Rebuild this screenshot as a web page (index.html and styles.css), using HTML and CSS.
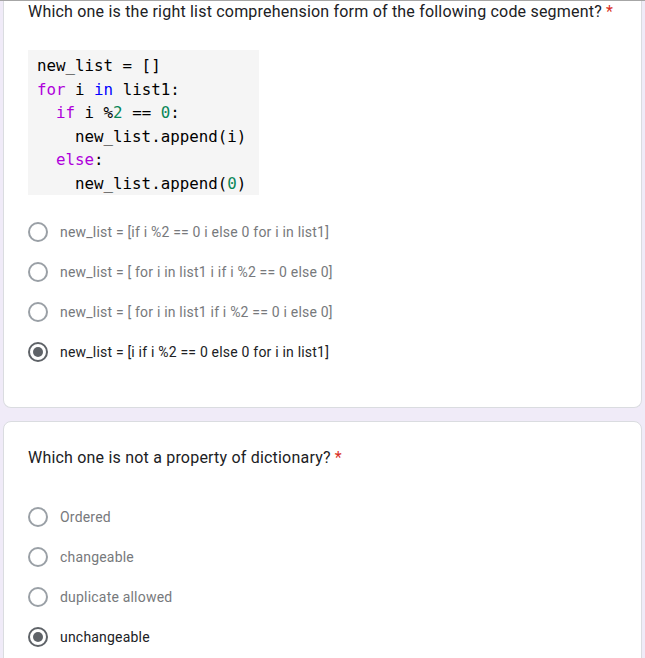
FILE: index.html
```html
<!DOCTYPE html>
<html lang="en">
<head>
<meta charset="utf-8">
<title>Quiz</title>
<link rel="stylesheet" href="styles.css">
</head>
<body>
<div class="page">
  <div class="card card-first">
    <div class="question">Which one is the right list comprehension form of the following code segment? <span class="req">*</span></div>
    <pre class="code">new_list = []
<span class="kw">for</span> i <span class="kb">in</span> list1:
  <span class="kw">if</span> i %<span class="num">2</span> == <span class="num">0</span>:
    new_list.append(i)
  <span class="kw">else</span>:
    new_list.append(<span class="num">0</span>)</pre>
    <div class="options opts-first">
      <div class="option"><span class="radio"></span><span class="label">new_list = [if i %2 == 0 i else 0 for i in list1]</span></div>
      <div class="option"><span class="radio"></span><span class="label">new_list = [ for i in list1 i if i %2 == 0 else 0]</span></div>
      <div class="option"><span class="radio"></span><span class="label">new_list = [ for i in list1 if i %2 == 0 i else 0]</span></div>
      <div class="option checked"><span class="radio"></span><span class="label">new_list = [i if i %2 == 0 else 0 for i in list1]</span></div>
    </div>
  </div>
  <div class="card card-second">
    <div class="question">Which one is not a property of dictionary? <span class="req">*</span></div>
    <div class="options opts-second">
      <div class="option"><span class="radio"></span><span class="label">Ordered</span></div>
      <div class="option"><span class="radio"></span><span class="label">changeable</span></div>
      <div class="option"><span class="radio"></span><span class="label">duplicate allowed</span></div>
      <div class="option checked"><span class="radio"></span><span class="label">unchangeable</span></div>
    </div>
  </div>
</div>
</body>
</html>
```

FILE: styles.css
```css
html, body {
  margin: 0;
  padding: 0;
}
body {
  background: #f0ebf8;
  border-top: 1px solid #a6a6a6;
  font-family: Roboto, "Noto Sans", Arial, sans-serif;
  color: #202124;
  height: 657px;
  overflow: hidden;
}
.page {
  padding: 0 3px;
}
.card {
  background: #fff;
  border: 1px solid #dadce0;
  border-radius: 8px;
  padding: 24px 24px 24px 24px;
  display: flow-root;
}
.card-first {
  border-top: none;
  border-radius: 0 0 8px 8px;
  padding-top: 0;
  padding-bottom: 35px;
}
.card-first .question {
  margin-top: -1px;
}
.card-second {
  margin-top: 13px;
}
.question {
  font-size: 16px;
  line-height: 24px;
  letter-spacing: 0.2px;
  color: #202124;
}
.req {
  color: #d93025;
}
.code {
  display: inline-block;
  margin: 26px 0 0 0;
  padding: 4px 13px 0 9px;
  background: #f5f5f5;
  font-family: "DejaVu Sans Mono", "Liberation Mono", monospace;
  font-size: 15.8px;
  line-height: 23.5px;
  color: #000;
  height: 141px;
  vertical-align: top;
}
.kw { color: #af00db; }
.kb { color: #0000ff; }
.num { color: #098658; }
.options {
  display: flex;
  flex-direction: column;
}
.opts-first {
  margin-top: 17px;
}
.opts-second {
  margin-top: 27px;
}
.option {
  display: flex;
  align-items: center;
  height: 40px;
  gap: 12px;
}
.radio {
  box-sizing: border-box;
  width: 20px;
  height: 20px;
  border: 2px solid #9aa0a6;
  border-radius: 50%;
  display: flex;
  align-items: center;
  justify-content: center;
  flex: none;
}
.label {
  font-size: 14px;
  letter-spacing: 0.2px;
  color: #77797c;
}
.option.checked .radio {
  border-color: #5f6368;
}
.option.checked .radio::after {
  content: "";
  width: 10px;
  height: 10px;
  border-radius: 50%;
  background: #5f6368;
}
.option.checked .label {
  color: #202124;
}
```
